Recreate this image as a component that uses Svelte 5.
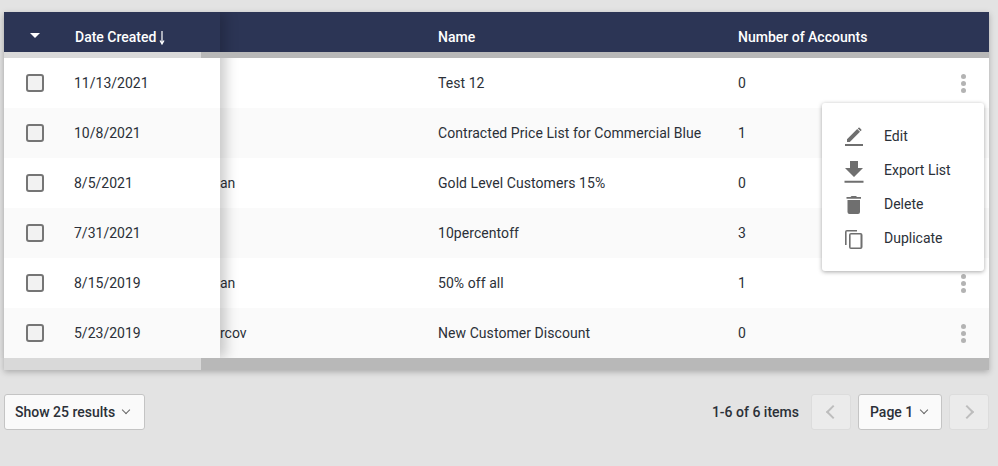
<script>
	const rows = [
		{ date: "11/13/2021", owner: "", name: "Test 12", count: 0 },
		{ date: "10/8/2021", owner: "", name: "Contracted Price List for Commercial Blue", count: 1 },
		{ date: "8/5/2021", owner: "an", name: "Gold Level Customers 15%", count: 0 },
		{ date: "7/31/2021", owner: "", name: "10percentoff", count: 3 },
		{ date: "8/15/2019", owner: "an", name: "50% off all", count: 1 },
		{ date: "5/23/2019", owner: "rcov", name: "New Customer Discount", count: 0 }
	]
</script>

<div class="page">
	<div class="card">
		<div class="row head">
			<span class="owner"></span>
			<span class="name">Name</span>
			<span class="count">Number of Accounts</span>
		</div>
		<div class="band"></div>
		{#each rows as row, i}
			<div class="row body" class:alt={i % 2 === 1}>
				<span class="owner">{row.owner}</span>
				<span class="name">{row.name}</span>
				<span class="count">{row.count}</span>
				<span class="kebab"><i></i><i></i><i></i></span>
			</div>
		{/each}
		<div class="band bottom"></div>

		<div class="fixed">
			<div class="fixed-head">
				<span class="caret"></span>
				<span class="date-title">Date Created</span>
				<svg class="sort" width="6" height="15" viewBox="0 0 6 15">
					<path d="M3 1v12M1 10.500 3 14l2-3.500" fill="none" stroke="#fff" stroke-width="1.200" />
				</svg>
			</div>
			<div class="fixed-gap"></div>
			{#each rows as row, i}
				<div class="fixed-row" class:alt={i % 2 === 1}>
					<span class="check"></span>
					<span>{row.date}</span>
				</div>
			{/each}
		</div>
		<div class="band-light top"></div>
		<div class="band-light low"></div>

		<div class="menu">
			<div class="item">
				<svg width="24" height="24" viewBox="0 0 24 24"><path d="M5 15.200V18h2.800L18 7.800 15.200 5zM19.300 6.500a.8.800 0 0 0 0-1.100l-1.700-1.700a.8.800 0 0 0-1.100 0l-.7.700 2.800 2.800zM3 20h18v2H3z" /></svg>
				<span>Edit</span>
			</div>
			<div class="item">
				<svg width="24" height="24" viewBox="0 0 24 24"><path d="M8 3h8v7h5l-9 9-9-9h5zM2.500 22.700h19v2h-19z" /></svg>
				<span>Export List</span>
			</div>
			<div class="item">
				<svg width="24" height="24" viewBox="0 0 24 24"><path d="M5.500 8h12.500v12a2 2 0 0 1-2 2H7.500a2 2 0 0 1-2-2zM19 5v1.800H4.500V5h4l1-1h4.500l1 1z" /></svg>
				<span>Delete</span>
			</div>
			<div class="item">
				<svg width="24" height="24" viewBox="0 0 24 24"><path d="M15 4H5a2 2 0 0 0-2 2v13h1.600V5.600H15zM18.500 7H9a2 2 0 0 0-2 2v12a2 2 0 0 0 2 2h9.500a2 2 0 0 0 2-2V9a2 2 0 0 0-2-2zm0 14.400H8.600V8.600h9.900z" /></svg>
				<span>Duplicate</span>
			</div>
		</div>
	</div>

	<div class="footer">
		<button class="btn show">Show 25 results <span class="chev"></span></button>
		<div class="pager">
			<span class="total">1-6 of 6 items</span>
			<button class="btn nav" disabled aria-label="Previous"><span class="arrow left"></span></button>
			<button class="btn page-btn">Page 1 <span class="chev"></span></button>
			<button class="btn nav" disabled aria-label="Next"><span class="arrow right"></span></button>
		</div>
	</div>
</div>

<style>
:global(body) {
	margin: 0;
	background: #e3e3e3;
	font-family: Roboto, "Liberation Sans", sans-serif;
}
.page {
	padding: 12px 9px 0 4px;
	height: 454px;
	overflow: hidden;
	font-size: 14px;
	color: #2b3038;
}
.card {
	position: relative;
	box-shadow: 0 2px 6px rgba(0, 0, 0, 0.25);
}
.row {
	display: flex;
	align-items: center;
}
.head {
	height: 40px;
	box-sizing: border-box;
	padding-top: 10px;
	background: #2c3555;
	color: #fff;
	font-weight: 500;
}
.body {
	height: 50px;
	background: #fff;
}
.alt {
	background: #fafafa;
}
.owner {
	width: 434px;
	padding-left: 216px;
	box-sizing: border-box;
	flex: none;
}
.name {
	width: 300px;
	flex: none;
}
.body .name {
	letter-spacing: 0.06px;
}
.count {
	flex: 1;
}
.kebab {
	display: flex;
	flex-direction: column;
	gap: 2px;
	margin-right: 23px;
}
.kebab i {
	width: 5px;
	height: 5px;
	border-radius: 50%;
	background: #b3b3b3;
}
.band {
	position: relative;
	z-index: 1;
	height: 6px;
	background: #b8b8b8;
}
.bottom {
	height: 12px;
}
.fixed {
	position: absolute;
	left: 0;
	top: 0;
	width: 216px;
	box-shadow: 6px 0 12px rgba(0, 0, 0, 0.2);
	clip-path: inset(0 -24px 0 -4px);
}
.fixed-head {
	height: 40px;
	box-sizing: border-box;
	padding-top: 10px;
	background: #2c3555;
	color: #fff;
	font-weight: 500;
	display: flex;
	align-items: center;
}
.caret {
	width: 0;
	height: 0;
	margin: 0 40px 0 26px;
	border-left: 5px solid transparent;
	border-right: 5px solid transparent;
	border-top: 5px solid #fff;
	transform: translateY(-2px);
}
.date-title {
	margin-left: -5px;
}
.sort {
	margin-left: 3px;
}
.fixed-gap {
	height: 6px;
}
.fixed-row {
	height: 50px;
	background: #fff;
	display: flex;
	align-items: center;
}
.fixed-row.alt {
	background: #fafafa;
}
.check {
	box-sizing: border-box;
	width: 18px;
	height: 18px;
	margin: 0 30px 0 22px;
	border: 2px solid #757575;
	border-radius: 3px;
	background: #f2f2f2;
}
.band-light {
	position: absolute;
	z-index: 2;
	left: 0;
	width: 197px;
	background: #d9d9d9;
}
.top {
	top: 40px;
	height: 6px;
}
.low {
	top: 346px;
	height: 12px;
}
.menu {
	position: absolute;
	z-index: 3;
	left: 818px;
	top: 91px;
	width: 162px;
	box-sizing: border-box;
	padding: 16px 0 16px 20px;
	background: #fff;
	border-radius: 3px;
	box-shadow: 0 1px 4px rgba(0, 0, 0, 0.35);
}
.item {
	display: flex;
	align-items: center;
	height: 34px;
	color: #2b3038;
}
.item svg {
	fill: #6f6f6f;
	margin-right: 18px;
	overflow: visible;
}
.footer {
	display: flex;
	justify-content: space-between;
	align-items: center;
	margin-top: 24px;
}
.btn {
	font: 500 14px Roboto, "Liberation Sans", sans-serif;
	color: #2b3038;
	background: #fafafa;
	border: 1px solid #c4c4c4;
	border-radius: 3px;
	height: 36px;
	padding: 0;
	display: flex;
	align-items: center;
	justify-content: flex-start;
}
.show {
	width: 141px;
	padding-left: 10px;
	gap: 8px;
}
.pager {
	display: flex;
	align-items: center;
}
.total {
	font-weight: 500;
	margin-right: 12px;
}
.nav {
	width: 40px;
	justify-content: center;
	background: #ebebeb;
	border-color: #dcdcdc;
}
.page-btn {
	width: 84px;
	padding-left: 11px;
	gap: 8px;
	margin: 0 7px;
}
.chev {
	width: 5px;
	height: 5px;
	border-right: 1.5px solid #666;
	border-bottom: 1.5px solid #666;
	transform: translateY(-2px) rotate(45deg);
}
.arrow {
	width: 8px;
	height: 8px;
	border-top: 2px solid #bdbdbd;
	border-right: 2px solid #bdbdbd;
}
.arrow.left {
	transform: translateX(2px) rotate(-135deg);
}
.arrow.right {
	transform: translateX(-2px) rotate(45deg);
}
</style>
